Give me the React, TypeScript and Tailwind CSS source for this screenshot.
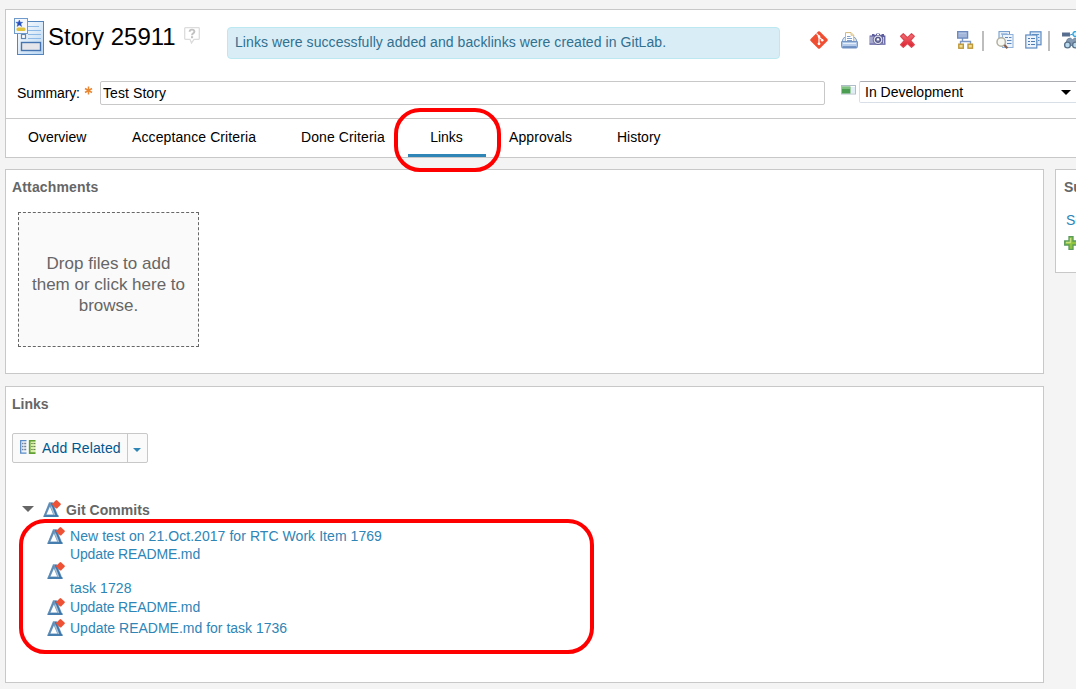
import React from 'react';

function StoryIcon() {
  return (
    <svg width="32" height="38" viewBox="0 0 32 38" className="shrink-0">
      <defs>
        <linearGradient id="doc" x1="0" y1="0" x2="1" y2="1">
          <stop offset="0" stopColor="#fff" />
          <stop offset="1" stopColor="#b9d6f2" />
        </linearGradient>
      </defs>
      <rect x="3.500" y="3.500" width="26" height="33" fill="url(#doc)" stroke="#5585bd" />
      <path d="M14 8.500h11M14 12.500h13M14 16.500h13M14 20.500h13" stroke="#8db9e6" strokeWidth="1.200" />
      <rect x="7.500" y="16.500" width="4" height="4" fill="#fff" stroke="#5f86b5" strokeWidth="1.200" />
      <rect x="7.500" y="24.500" width="19" height="8" fill="#e6e6ea" stroke="#4674b0" strokeWidth="1.400" />
      <rect x="0.500" y="0.500" width="13" height="15" fill="#f4f7fb" stroke="#6f9acb" />
      <path d="M5.300 2l1 2.200 2.500.1-2 1.500.9 2.700-2.400-1.400-2.300 1.400.8-2.700-2-1.500 2.600-.1z" fill="#2450bd" stroke="#2450bd" strokeWidth=".4" />
      <rect x="2.500" y="9.500" width="9" height="3.500" rx="1.500" fill="#dfc33c" />
    </svg>
  );
}

function HelpIcon() {
  return (
    <svg width="16" height="17" viewBox="0 0 16 17">
      <path d="M1.500.7h13q.8 0 .8.8v10q0 .8-.8.8H10L7.500 16 6 12.300H1.500q-.8 0-.8-.8v-10q0-.8.800-.8z" fill="#fff" stroke="#dcdcdc" strokeWidth="1.300" />
      <path d="M5.600 4.800q.1-2.200 2.400-2.200t2.400 2q0 1.100-1.200 1.800T8 8.300" fill="none" stroke="#c2c2c2" strokeWidth="1.900" />
      <path d="M7 9.200h2.100v2H7z" fill="#c2c2c2" />
    </svg>
  );
}

function GitIcon() {
  return (
    <svg width="18" height="18" viewBox="0 0 18 18">
      <path d="M8.100.6q.9-.8 1.800 0l7.500 7.500q.8.9 0 1.800l-7.500 7.500q-.9.8-1.800 0L.6 9.900q-.8-.9 0-1.800z" fill="#f04e32" />
      <path d="M6.500 2.500L9 5.200V13M9 6l3.200 3" stroke="#fff" strokeWidth="1.200" fill="none" />
      <circle cx="9" cy="5.600" r="1.300" fill="#fff" />
      <circle cx="9" cy="12.800" r="1.400" fill="#fff" />
      <circle cx="12.200" cy="9.200" r="1.300" fill="#fff" />
    </svg>
  );
}

function PrintIcon() {
  return (
    <svg width="17" height="17" viewBox="0 0 17 17">
      <path d="M1.500 8L3 5.500h11L15.500 8v3h-14z" fill="#dbe6f3" stroke="#86a3ca" />
      <path d="M4.500 10V.6H10l2.700 2.700V10z" fill="#fff" stroke="#d2b878" />
      <path d="M10 .6v2.700h2.700" fill="#f6e4b5" stroke="#d2b878" strokeWidth=".7" />
      <path d="M6 4.500h3.500M6 6.500h5M6 8.500h5" stroke="#7fa0cc" />
      <path d="M.6 9.600h15.800v5.100q0 1.300-1.300 1.300H1.900q-1.300 0-1.300-1.300z" fill="#b7cdea" stroke="#6f90c0" />
      <path d="M2 11.500h13" stroke="#e5eef9" />
      <path d="M1.500 15h14" stroke="#5f83b8" strokeWidth="1.500" />
    </svg>
  );
}

function CameraIcon() {
  return (
    <svg width="17" height="13" viewBox="0 0 17 13">
      <path d="M1 2.500h2V1h2.500v1h1L7.500.5h3l1 1.500h1V1H15v1.500h1.400v9.300H.6V2.500z" fill="#5d5da0" />
      <path d="M2 3.500v7M4 3.500v7M14.500 4v7" stroke="#d0d1e8" strokeWidth="1.300" />
      <path d="M.6 11h15.800" stroke="#8485b6" strokeWidth="1.200" />
      <circle cx="9" cy="6.800" r="4.800" fill="#d8d9e7" stroke="#55568d" strokeWidth=".8" />
      <circle cx="9" cy="6.800" r="2.600" fill="#7f82ad" stroke="#4a4b80" />
      <circle cx="9" cy="6.400" r="1.100" fill="#fff" />
      <path d="M8 1.500h2" stroke="#fff" />
    </svg>
  );
}

function DeleteIcon() {
  return (
    <svg width="15" height="15" viewBox="0 0 15 15">
      <defs>
        <linearGradient id="del" x1="0" y1="0" x2="0" y2="1">
          <stop offset="0" stopColor="#f3747a" />
          <stop offset="1" stopColor="#dc1c2b" />
        </linearGradient>
      </defs>
      <path d="M3.300.7l4.200 4 4-4 2.800 2.600-3.700 4.200 3.700 4.200-2.800 2.600-4-3.700-4.200 3.700L.6 11.700l3.800-4.200L.6 3.300z" fill="url(#del)" stroke="#dd4751" strokeWidth="1.200" strokeLinejoin="round" />
    </svg>
  );
}

function HierarchyIcon() {
  return (
    <svg width="17" height="18" viewBox="0 0 17 18">
      <path d="M5.500 7v4M3.500 14v-3.500h10V14" stroke="#7e98c5" fill="none" strokeWidth="1.400" />
      <rect x=".6" y=".6" width="10" height="6.500" fill="#a3b6da" stroke="#6c88bc" strokeWidth="1.300" />
      <path d="M2 2.200h7" stroke="#bccbe6" />
      <rect x="1.800" y="13.200" width="4.500" height="4" fill="#f1dc94" stroke="#bd9738" strokeWidth="1.400" />
      <rect x="11" y="13.200" width="4.500" height="4" fill="#f1dc94" stroke="#bd9738" strokeWidth="1.400" />
    </svg>
  );
}

function SearchDocsIcon() {
  return (
    <svg width="18" height="18" viewBox="0 0 18 18">
      <rect x="3" y=".6" width="10.500" height="13" fill="#eef4fb" stroke="#6b95c8" />
      <path d="M5 3h6.500" stroke="#6b95c8" />
      <rect x="6.500" y="3.500" width="10.500" height="13" fill="#edf4fc" stroke="#8fb0d8" />
      <path d="M9 6.500h3M13 6.500h2.500M11 9.500h4.500M11 12.500h4.500" stroke="#5c86bb" strokeWidth="1.200" />
      <circle cx="5.200" cy="11" r="4.200" fill="#f8f8f2" stroke="#b2b0a2" strokeWidth="1.500" />
      <path d="M8.400 14l3 3.200" stroke="#86604f" strokeWidth="2.300" />
    </svg>
  );
}

function CopyDocsIcon() {
  return (
    <svg width="17" height="18" viewBox="0 0 17 18">
      <rect x="5.200" y=".8" width="10.800" height="13" fill="#dfeaf7" stroke="#5d8ac2" strokeWidth="1.200" />
      <path d="M7 3.500h7M13 6.500h1.500M13 9.500h1.500" stroke="#5f92c6" />
      <rect x=".8" y="4" width="11" height="13" fill="#edf4fc" stroke="#5d8ac2" strokeWidth="1.200" />
      <path d="M3 7.500h2M6 7.500h4M3 10.500h2M6 10.500h4M3 13.500h2M6 13.500h4" stroke="#4d7db4" strokeWidth="1.200" />
    </svg>
  );
}

function BinocularsIcon() {
  return (
    <svg width="20" height="18" viewBox="0 0 20 18">
      <rect x=".5" y="2" width="7" height="3" fill="#526d8e" stroke="#5d7191" />
      <path d="M8 4l3-1" stroke="#5090cc" />
      <circle cx="13.500" cy="3" r="2.500" fill="#d9f4ff" stroke="#2ba8e5" strokeWidth="1.300" />
      <path d="M3 14L5.500 8l3-1 2 2 2-2 3 1 3 7z" fill="#8499b2" stroke="#6f869f" />
      <circle cx="5.500" cy="14" r="2.900" fill="#b9d9ee" stroke="#5a728b" strokeWidth="1.400" />
      <circle cx="13.500" cy="14" r="2.900" fill="#b9d9ee" stroke="#5a728b" strokeWidth="1.400" />
    </svg>
  );
}

function ProgressIcon() {
  return (
    <svg width="15" height="10" viewBox="0 0 15 10">
      <rect x=".5" y=".5" width="14" height="8.500" fill="#fff" stroke="#afbdc9" />
      <rect x="1" y="1.500" width="8.500" height="7" fill="#4b9e51" />
      <path d="M1 3h8" stroke="#91cc90" strokeWidth="1.500" />
      <rect x="10" y="2" width="4" height="6" fill="#e0eef8" />
    </svg>
  );
}

function RelatedIcon() {
  return (
    <svg width="16" height="14" viewBox="0 0 16 14">
      <path d="M6.500.6H.7v12.500h5.800" fill="#edf3fb" stroke="#5a8bc6" strokeWidth="1.300" />
      <path d="M2 3.500h1.500M4.200 3.500h2M2 6.500h1.500M4.200 6.500h2M2 9.500h1.500M4.200 9.500h2" stroke="#76859a" strokeWidth="1.300" />
      <path d="M15.500.6H9.700v12.500h5.800" fill="#d9edab" stroke="#5f9f34" strokeWidth="1.700" />
      <path d="M11.200 3.500h1.500M13.400 3.500h2M11.200 6.500h1.500M13.400 6.500h2M11.200 9.500h1.500M13.400 9.500h2" stroke="#6a8456" strokeWidth="1.200" />
    </svg>
  );
}

function CommitIcon() {
  return (
    <svg width="18" height="18" viewBox="0 0 18 18" className="block shrink-0">
      <path fillRule="evenodd" d="M6 2.300h3.700L15.700 17H.2zM6.900 6.800L3.500 14.500h6.700z" fill="#6f98bf" />
      <path d="M8.500 3l5.300 13.300M.8 16h14.700" stroke="#3a75aa" strokeWidth="1.500" />
      <path d="M7 3.500L1.400 16" stroke="#5c8bb5" strokeWidth="1.200" />
      <path d="M8.200 6.500l3.300 8.500" stroke="#a9c2d8" strokeWidth="1.200" />
      <path d="M12.700.4q.7-.6 1.500 0l3.300 3.200q.6.700 0 1.500l-3.200 3.200q-.8.600-1.500 0L9.400 5.100q-.6-.7 0-1.500z" fill="#ee5133" />
    </svg>
  );
}

function PlusIcon() {
  return (
    <svg width="14" height="14" viewBox="0 0 14 14">
      <path d="M5 .7h4V5h4.300v4H9v4.300H5V9H.7V5H5z" fill="#8fc43c" stroke="#5a9a5b" strokeWidth="1.300" />
      <path d="M6.500 2v4.500H2" stroke="#c7e37e" strokeWidth="1.300" fill="none" />
    </svg>
  );
}

const tabs = [
  { label: 'Overview', box: 'w-[104px]' },
  { label: 'Acceptance Criteria', box: 'w-[169px] tracking-[0.1px]' },
  { label: 'Done Criteria', box: 'w-[129px] tracking-[0.1px]' },
  { label: 'Links', box: 'w-[79px]', active: true },
  { label: 'Approvals', box: 'w-[108px] tracking-[0.1px]' },
  { label: 'History', box: 'w-[90px]' },
];

function Header() {
  return (
    <header className="w-[1100px] border border-[#c8c8c8] bg-white">
      <div className="flex h-[62px] pt-2 pl-2">
        <StoryIcon />
        <h1 className="ml-[2px] h-9 w-[128px] text-2xl leading-[38px] text-black">Story 25911</h1>
        <div className="ml-2 pt-[9px]"><HelpIcon /></div>
        <div className="mt-[9px] ml-[27px] h-8 w-[553px] rounded border border-[#bce8f1] bg-[#d9edf7] pl-[7px] text-[14px] leading-[29px] tracking-[0.07px] text-[#31708f]">
          Links were successfully added and backlinks were created in GitLab.
        </div>
        <div className="mt-[13px] ml-[30px] flex h-[18px] items-start">
          <div className="w-[31px]"><GitIcon /></div>
          <div className="w-[28px] pt-px"><PrintIcon /></div>
          <div className="w-[31px] pt-[2px]"><CameraIcon /></div>
          <div className="w-[57px] pt-[2px]"><DeleteIcon /></div>
          <div className="w-[25px]"><HierarchyIcon /></div>
          <i className="mr-3 h-5 w-[2px] bg-[#bdbdbd]" />
          <div className="w-[29px]"><SearchDocsIcon /></div>
          <div className="w-[23px]"><CopyDocsIcon /></div>
          <i className="mr-3 h-5 w-[2px] bg-[#bdbdbd]" />
          <BinocularsIcon />
        </div>
      </div>
      <div className="flex h-[46px] pt-[9px] pl-[11px] text-sm text-black">
        <span className="w-[67px] leading-[24px] tracking-[-0.12px]">Summary:</span>
        <svg width="9" height="9" viewBox="0 0 9 9" className="mt-[5px] mr-[6px]">
          <path d="M4.500.5v8M1 2.500l7 4M8 2.500l-7 4" stroke="#e98732" strokeWidth="1.500" />
        </svg>
        <div className="ml-px h-6 w-[725px] rounded-[2px] border border-[#c8c8c8] pl-[2px] leading-[23px] tracking-[0.08px]">Test Story</div>
        <div className="mt-[4px] ml-[16px] w-[18px]"><ProgressIcon /></div>
        <div className="flex h-[22px] w-[230px] rounded-[2px] border border-[#d9dfe6] border-t-[#abadb3] pl-[5px] leading-[20px]">
          <span className="w-[196px]">In Development</span>
          <svg width="10" height="5" viewBox="0 0 10 5" className="mt-[8px]"><path d="M0 0h10L5 5z" /></svg>
        </div>
      </div>
      <nav className="flex h-[39px] border-t border-[#c8c8c8] pl-[22px] text-sm text-black">
        {tabs.map((t) => (
          <div key={t.label} className={t.active ? 'relative w-[79px]' : t.box}>
            {t.active ? (
              <div className="-ml-[22px] flex h-[38px] w-[78px] justify-center border-b-[3px] border-[#2e85b6] pr-px leading-[36px]">{t.label}</div>
            ) : (
              <div className="leading-[36px]">{t.label}</div>
            )}
            {t.active && <div className="absolute -top-[11px] -left-[36px] h-[64px] w-[107px] rounded-[26px] border-4 border-[#f00]" />}
          </div>
        ))}
      </nav>
    </header>
  );
}

const commits = [
  { lines: ['New test on 21.Oct.2017 for RTC Work Item 1769'], row: 'h-[18px]', text: 'leading-[20px] tracking-[0.06px]', icon: 'pt-px' },
  { lines: ['Update README.md', '\u00a0', 'task 1728'], row: 'h-[53px]', text: 'leading-[17px] pt-[2px] tracking-[-0.14px] last:[&>div:last-child]:tracking-[0.1px]', icon: 'pt-[18px]' },
  { lines: ['Update README.md'], row: 'h-[21px]', text: 'leading-[20px] tracking-[-0.14px]', icon: 'pt-px' },
  { lines: ['Update README.md for task 1736'], row: 'h-[21px]', text: 'leading-[20px]', icon: 'pt-px' },
];

export default function App() {
  return (
    <main className="h-[689px] w-[1076px] overflow-hidden bg-[#f4f4f4] pt-[9px] pl-[5px] font-['Liberation_Sans',Arial,sans-serif]">
      <Header />
      <div className="mt-[11px] flex w-[1140px] items-start gap-[11px]">
        <div className="flex w-[1039px] flex-col gap-3">
          <section className="h-[205px] border border-[#c8c8c8] bg-white pl-[6px]">
            <h2 className="h-[42px] text-sm leading-[35px] font-bold tracking-[0.15px] text-[#666]">Attachments</h2>
            <div className="ml-[6px] flex h-[135px] w-[181px] items-center justify-center border border-dashed border-[#666] bg-[#fafafa] pt-[10px] text-center text-[17px] leading-[21px] text-[#666]">
              <p>Drop files to add<br />them or click here to<br />browse.</p>
            </div>
          </section>
          <section className="h-[297px] border border-[#c8c8c8] bg-white pl-[6px]">
            <h2 className="h-[46px] text-sm leading-[35px] font-bold text-[#666]">Links</h2>
            <button className="flex h-[30px] w-[136px] rounded-[2px] border border-[#c8c8c8] bg-[#fafafa] text-sm leading-[29px] text-[#00568f]">
              <span className="mt-[6px] ml-[7px] w-[22px]"><RelatedIcon /></span>
              <span className="w-[85px] text-left tracking-[0.16px]">Add Related</span>
              <span className="h-[28px] w-px bg-[#c8c8c8]" />
              <svg width="8" height="4" viewBox="0 0 8 4" className="mt-[14px] ml-[5px]"><path d="M0 0h8L4 4z" fill="#2e85b6" /></svg>
            </button>
            <div className="mt-[37px] flex h-[20px]">
              <svg width="12" height="6" viewBox="0 0 12 6" className="mt-[6px] ml-[10px]"><path d="M0 0h12L6 6z" fill="#666" /></svg>
              <div className="ml-[9px]"><CommitIcon /></div>
              <h3 className="ml-[5px] text-sm leading-[20px] font-bold tracking-[0.06px] text-[#666]">Git Commits</h3>
            </div>
            <div className="relative pt-[6px] pl-[35px] text-sm text-[#2e85b6]">
              <div className="absolute -top-px left-[7px] h-[135px] w-[575px] rounded-[26px] border-4 border-[#f00]" />
              {commits.map((c, i) => (
                <div key={i} className={`flex ${c.row}`}>
                  <div className={c.icon}><CommitIcon /></div>
                  <div className={`ml-[5px] ${c.text}`}>
                    {c.lines.map((l) => <div key={l}>{l}</div>)}
                  </div>
                </div>
              ))}
            </div>
          </section>
        </div>
        <aside className="h-[104px] w-[90px] border border-[#c8c8c8] bg-white pl-[8px] text-sm">
          <h2 className="h-[40px] leading-[35px] font-bold text-[#666]">Subscribers</h2>
          <div className="ml-[2px] leading-[20px] text-[#2e85b6]">Someone</div>
          <div className="mt-[6px]"><PlusIcon /></div>
        </aside>
      </div>
    </main>
  );
}
